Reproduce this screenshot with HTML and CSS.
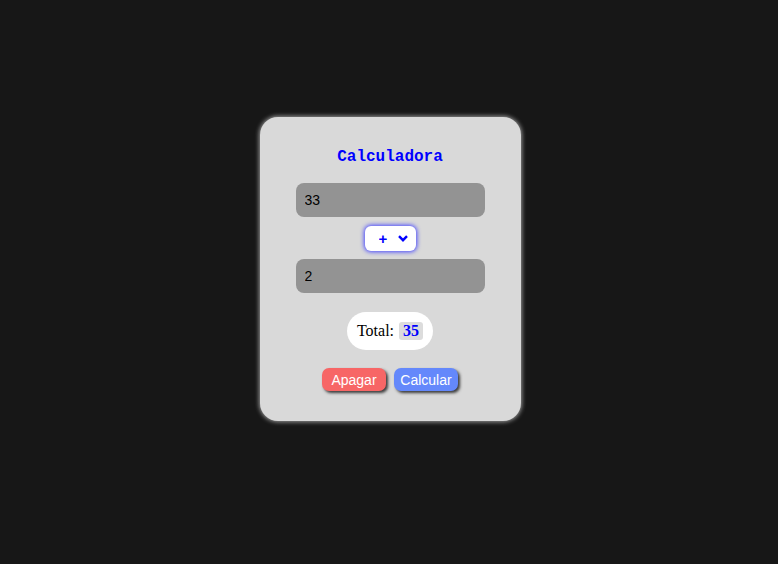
FILE: index.html
```html
<!DOCTYPE html>
<html lang="pt">
<head>
<meta charset="utf-8">
<title>Calculadora</title>
<link rel="stylesheet" href="styles.css">
</head>
<body>
<div class="card">
  <h1 class="title">Calculadora</h1>
  <input class="num" type="text" value="33">
  <div class="op">
    <select class="op-select"><option>+</option><option>-</option><option>*</option><option>/</option></select>
    <svg class="chev" width="10" height="7" viewBox="0 0 10 7"><path d="M1 1.2 L5 5.2 L9 1.2" fill="none" stroke="#0000ff" stroke-width="2.4"/></svg>
  </div>
  <input class="num" type="text" value="2">
  <div class="total">Total: <span class="result">35</span></div>
  <div class="buttons">
    <button class="btn btn-clear">Apagar</button>
    <button class="btn btn-calc">Calcular</button>
  </div>
</div>
</body>
</html>
```
FILE: styles.css
```css
html, body {
  margin: 0;
  padding: 0;
}
body {
  background: #171717;
  height: 564px;
  display: flex;
  justify-content: center;
  align-items: flex-start;
}
.card {
  margin-top: 117px;
  margin-left: 2px;
  width: 261px;
  height: 304px;
  box-sizing: border-box;
  background: #d9d9d9;
  border-radius: 18px;
  box-shadow: 0 0 4px 1px #9a9a9a;
  display: flex;
  flex-direction: column;
  align-items: center;
  padding-top: 30px;
}
.title {
  margin: 0;
  font-family: "Liberation Mono", "Courier New", monospace;
  font-size: 16px;
  font-weight: bold;
  color: #0000ff;
  line-height: 20px;
  height: 20px;
}
.num {
  width: 189px;
  height: 34px;
  box-sizing: border-box;
  border: none;
  border-radius: 8px;
  background: #939393;
  padding: 0 9px;
  font-family: "Liberation Sans", Arial, sans-serif;
  font-size: 14px;
  color: #000;
  outline: none;
}
.card > .num:first-of-type {
  margin-top: 16px;
}
.op {
  margin: 9px 0 8px;
  width: 51px;
  height: 25px;
  box-sizing: border-box;
  background: #fff;
  border-radius: 6px;
  box-shadow: 0 0 4px 1px #4848ff;
  display: flex;
  align-items: center;
  padding-left: 14px;
  gap: 9px;
}
.op-select {
  appearance: none;
  -webkit-appearance: none;
  border: none;
  background: transparent;
  padding: 0;
  margin: 0;
  font-family: "Liberation Sans", Arial, sans-serif;
  font-size: 15px;
  font-weight: bold;
  color: #0000ff;
  outline: none;
  width: 10px;
}
.chev {
  display: block;
}
.total {
  margin-top: 19px;
  width: 86px;
  height: 38px;
  box-sizing: border-box;
  background: #fff;
  border-radius: 19px;
  display: flex;
  align-items: center;
  justify-content: center;
  gap: 5px;
  font-family: "Liberation Serif", "Times New Roman", serif;
  font-size: 16px;
  color: #000;
}
.result {
  background: #dcdcdc;
  color: #0000ff;
  font-weight: bold;
  border-radius: 3px;
  padding: 0 4px;
  line-height: 18px;
}
.buttons {
  margin-top: 18px;
  display: flex;
  gap: 8px;
}
.btn {
  width: 64px;
  height: 23px;
  border: none;
  border-radius: 7px;
  color: #fff;
  font-family: "Liberation Sans", Arial, sans-serif;
  font-size: 14px;
  padding: 0;
  box-shadow: 2px 2px 3px #3a3a3a;
}
.btn-clear {
  background: #f76666;
}
.btn-calc {
  background: #6488fb;
}
```
